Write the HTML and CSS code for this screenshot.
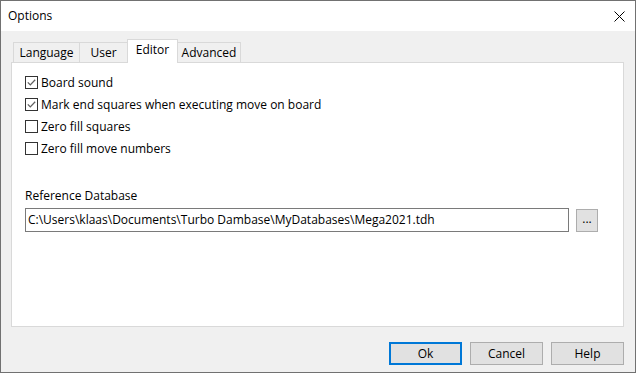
FILE: index.html
```html
<!DOCTYPE html>
<html>
	<head>
		<meta charset="utf-8">
		<title>Options</title>
		<link rel="stylesheet" href="styles.css">
	</head>
	<body>
		<div class="window">
			<div class="titlebar">
				<span class="title">Options</span>
				<svg class="close" width="11" height="11" viewBox="0 0 11 11">
					<path d="M0.5 0.5 L10.5 10.5 M10.5 0.5 L0.5 10.5" stroke="#000" stroke-width="1" fill="none"/>
				</svg>
			</div>
			<div class="content">
				<!-- tab strip -->
				<div class="tabs">
					<div class="tab tab-language">Language</div>
					<div class="tab tab-user">User</div>
					<div class="tab tab-editor active">Editor</div>
					<div class="tab tab-advanced">Advanced</div>
				</div>
				<div class="panel">
					<label class="check">
						<span class="box"><svg width="11" height="11" viewBox="0 0 11 11"><polyline points="1.8,5.4 4.3,7.9 9.2,2.8" stroke="#606060" stroke-width="1.3" fill="none"/></svg></span>
						Board sound
					</label>
					<label class="check">
						<span class="box"><svg width="11" height="11" viewBox="0 0 11 11"><polyline points="1.8,5.4 4.3,7.9 9.2,2.8" stroke="#606060" stroke-width="1.3" fill="none"/></svg></span>
						Mark end squares when executing move on board
					</label>
					<label class="check">
						<span class="box"></span>
						Zero fill squares
					</label>
					<label class="check">
						<span class="box"></span>
						Zero fill move numbers
					</label>

					<div class="ref-label">Reference Database</div>
					<div class="ref-row">
						<div class="path">C:\Users\klaas\Documents\Turbo Dambase\MyDatabases\Mega2021.tdh</div>
						<button class="browse" type="button">...</button>
					</div>
				</div>
				<div class="footer">
					<button class="btn btn-default" type="button">Ok</button>
					<button class="btn" type="button">Cancel</button>
					<button class="btn" type="button">Help</button>
				</div>
			</div>
		</div>
	</body>
</html>
```

FILE: styles.css
```css
body {
	margin: 0;
	padding: 0;
	font-family: "Open Sans", "Noto Sans", sans-serif;
	font-size: 12px;
	color: #000;
}
.window {
	width: 636px;
	height: 373px;
	box-sizing: border-box;
	border: 1px solid #717171;
	display: flex;
	flex-direction: column;
	background-color: #fff;
}
.titlebar {
	height: 30px;
	flex: none;
	display: flex;
	align-items: center;
	justify-content: space-between;
	padding: 0 10px 0 7px;
	background-color: #fff;
}
.title {
	line-height: 16px;
}
.close {
	display: block;
}
.content {
	flex: 1;
	background-color: #f0f0f0;
	padding: 8px 11px 0 10px;
}
.tabs {
	height: 23px;
	display: flex;
	align-items: flex-end;
	padding-left: 2px;
}
.tab {
	height: 20px;
	box-sizing: border-box;
	border: 1px solid #d9d9d9;
	border-bottom: none;
	margin-left: -1px;
	background-color: #f0f0f0;
	text-align: center;
	line-height: 19px;
}
.tab-language {
	width: 67px;
	margin-left: 0;
}
.tab-user {
	width: 49px;
}
.tab-editor {
	width: 51px;
}
.tab-advanced {
	width: 64px;
}
.tab.active {
	height: 24px;
	margin-bottom: -1px;
	background-color: #fff;
	line-height: 20px;
	position: relative;
	z-index: 1;
}
.panel {
	height: 265px;
	box-sizing: border-box;
	border: 1px solid #d9d9d9;
	background-color: #fff;
	padding: 13px 13px 0;
}
.check {
	display: flex;
	align-items: center;
	height: 13px;
	margin-bottom: 9px;
	line-height: 16px;
}
.box {
	width: 13px;
	height: 13px;
	box-sizing: border-box;
	border: 1px solid #333;
	background-color: #fff;
	margin-right: 3px;
	flex: none;
}
.box svg {
	display: block;
}
.ref-label {
	margin-top: 33px;
	line-height: 16px;
}
.ref-row {
	display: flex;
	align-items: flex-start;
	margin-top: 4px;
}
.path {
	width: 544px;
	height: 24px;
	box-sizing: border-box;
	border: 1px solid #7a7a7a;
	padding-left: 2px;
	line-height: 22px;
	white-space: nowrap;
}
.browse {
	width: 22px;
	height: 23px;
	margin: 1px 0 0 7px;
	padding: 0 0 4px;
	box-sizing: border-box;
	border: 1px solid #adadad;
	background-color: #e1e1e1;
	font-family: inherit;
	font-size: 12px;
	line-height: 12px;
}
.footer {
	display: flex;
	justify-content: flex-end;
	gap: 8px;
	margin-top: 15px;
}
.btn {
	width: 73px;
	height: 23px;
	box-sizing: border-box;
	border: 1px solid #adadad;
	background-color: #e1e1e1;
	font-family: inherit;
	font-size: 12px;
	padding: 0;
	color: #000;
}
.btn-default {
	border: 2px solid #0078d7;
}
```
